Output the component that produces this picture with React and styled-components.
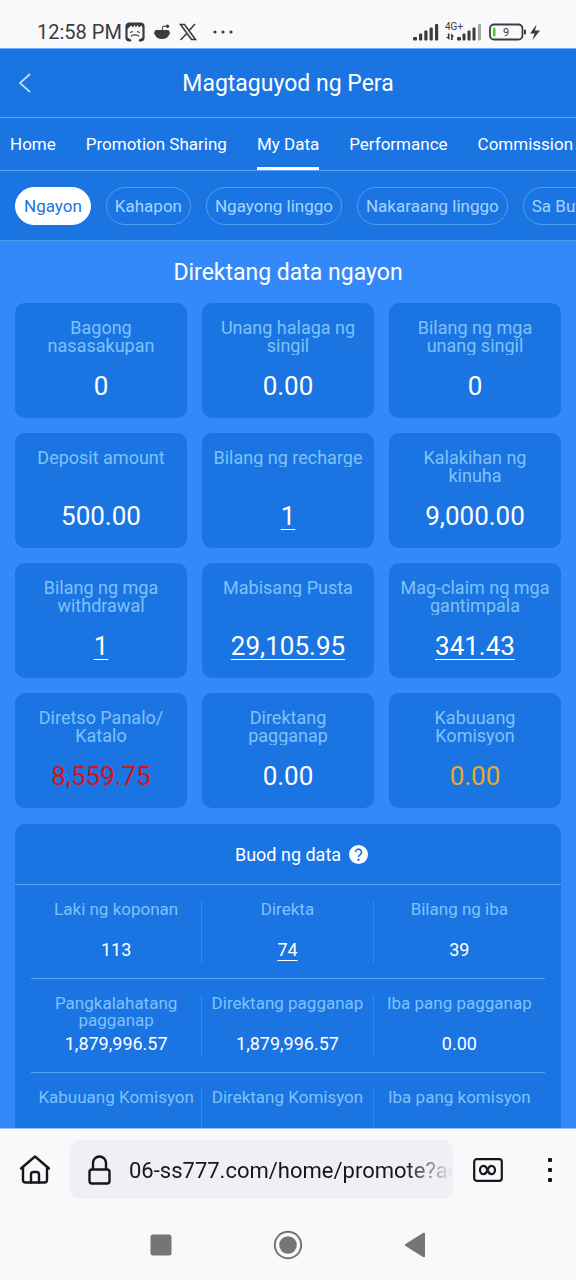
import React, { useState } from 'react'
import styled, { createGlobalStyle } from 'styled-components'

const GlobalStyle = createGlobalStyle`
  *, *::before, *::after {
    box-sizing: border-box;
  }

  body {
    margin: 0;
    background: #f9f9fb;
    font-family: Roboto, 'Noto Sans', sans-serif;
  }

  button, input {
    margin: 0;
    padding: 0;
    border: 0;
    background: none;
    color: inherit;
    font: inherit;
  }

  a {
    color: inherit;
    text-decoration: none;
  }

  svg {
    display: block;
    flex: none;
    overflow: visible;
  }
`

const Screen = styled.div`
  display: flex;
  flex-direction: column;
  height: 100vh;
  overflow: hidden;
`

const StatusBar = styled.div`
  display: flex;
  align-items: center;
  justify-content: space-between;
  height: 48px;
  padding: 15px 35px 0 37px;
  color: #3c3c3e;
  font-size: 20px;
  line-height: 24px;
`

const StatusGroup = styled.div`
  display: flex;
  align-items: center;
  gap: ${({ $gap }) => $gap}px;
`

const Page = styled.main`
  flex: 1;
  min-height: 0;
  overflow: hidden;
  border-top: 1px solid #6aaef6;
  border-bottom: 1px solid #8fc0f8;
  background: #3389f9;
  color: #fff;
`

const Header = styled.header`
  display: grid;
  grid-template-columns: 60px 1fr 60px;
  align-items: center;
  height: 69px;
  border-bottom: 1px solid #55a5f5;
  background: #1a74e2;

  button {
    width: 60px;
    padding-left: 17px;
    color: #b5e0ff;
  }

  h1 {
    margin: 0;
    padding-top: 2px;
    font-size: 23px;
    font-weight: 400;
    line-height: 28px;
    text-align: center;
  }
`

const Tabs = styled.nav`
  display: flex;
  gap: 30px;
  height: 53px;
  padding: 0 10px;
  overflow: hidden;
  border-bottom: 1px solid #55a5f5;
  background: #1a74e2;
`

const Tab = styled.a`
  flex: none;
  border-bottom: 3px solid ${({ $active }) => ($active ? '#fff' : 'transparent')};
  font-size: 17px;
  line-height: 52px;
  white-space: nowrap;
`

const Periods = styled.div`
  display: flex;
  gap: 15px;
  height: 70px;
  padding: 16px 15px;
  overflow: hidden;
  border-bottom: 1px solid #4c9af6;
  background: #1a74e2;
`

const Period = styled.button`
  flex: none;
  height: 38px;
  padding: 0 8px;
  border: 1px solid ${({ $active }) => ($active ? '#fff' : '#4b9ff4')};
  border-radius: 19px;
  background: ${({ $active }) => ($active ? '#fff' : 'transparent')};
  color: ${({ $active }) => ($active ? '#1a74e2' : '#a5d5ff')};
  font-size: 17px;
  white-space: nowrap;
`

const SectionTitle = styled.h2`
  margin: 0;
  padding: 18px 0 16px;
  font-size: 23px;
  font-weight: 400;
  line-height: 28px;
  text-align: center;
`

const Cards = styled.dl`
  display: grid;
  grid-template-columns: repeat(3, 1fr);
  gap: 15px;
  margin: 0 15px 16px;
`

const Card = styled.div`
  height: 115px;
  padding: 16px 8px 0;
  border-radius: 10px;
  background: #1a74e2;
  text-align: center;

  dt {
    height: 36px;
    color: #7fc2fb;
    font-size: 18px;
    line-height: 18px;
  }

  dd {
    margin: 15px 0 0;
    color: ${({ $tone }) => $tone || '#fff'};
    font-size: 26px;
    line-height: 32px;
  }
`

const Clip = styled.span`
  display: block;
  overflow: hidden;
`

const ValueLink = styled.a`
  text-decoration: underline;
  text-decoration-thickness: 1px;
  text-decoration-skip-ink: none;
  text-underline-offset: 4px;
`

const Summary = styled.section`
  margin: 0 15px;
  border-radius: 10px 10px 0 0;
  background: #1a74e2;
`

const SummaryTitle = styled.div`
  display: grid;
  grid-template-columns: 1fr auto 1fr;
  align-items: center;
  column-gap: 8px;
  height: 61px;
  border-bottom: 1px solid #55a5f5;

  h2 {
    grid-column: 2;
    margin: 0;
    font-size: 18px;
    font-weight: 400;
  }

  button {
    justify-self: start;
  }
`

const SummaryRow = styled.dl`
  display: grid;
  grid-template-columns: repeat(3, 1fr);
  margin: 0 16px;
  padding: 16px 0 15px;
  border-bottom: 1px solid #55a5f5;
`

const SummaryCell = styled.div`
  height: 62px;
  padding: 0 5px;
  border-right: 1px solid #3488ec;
  text-align: center;

  &:last-child {
    border-right: 0;
  }

  dt {
    height: 34px;
    color: #7fc2fb;
    font-size: 17px;
    line-height: 17px;
  }

  dd {
    margin: 4px 0 0;
    font-size: 18px;
    line-height: 22px;
  }
`

const BrowserBar = styled.div`
  display: flex;
  align-items: center;
  height: 81px;
  padding: 0 22px 0 19px;
  color: #17171b;
`

const AddressBox = styled.label`
  display: flex;
  flex: 1;
  align-items: center;
  gap: 18px;
  min-width: 0;
  height: 59px;
  margin: 0 20px 0 19px;
  padding-left: 18px;
  border-radius: 10px;
  background: #f0f0f4;

  input {
    flex: 1;
    min-width: 0;
    padding-top: 2px;
    outline: 0;
    font-size: 22px;
    mask-image: linear-gradient(to left, transparent, #000 48px);
  }
`

const MenuButton = styled.button`
  margin-left: 43px;
`

const SystemNav = styled.nav`
  display: flex;
  align-items: center;
  justify-content: center;
  gap: 98px;
  height: 70px;
  color: #757575;
`

const tabs = ['Home', 'Promotion Sharing', 'My Data', 'Performance', 'Commission']

const periods = [
  'Ngayon',
  'Kahapon',
  'Ngayong linggo',
  'Nakaraang linggo',
  'Sa Buwang ito',
]

const cards = [
  { label: 'Bagong nasasakupan', value: '0' },
  { label: 'Unang halaga ng singil', value: '0.00' },
  { label: 'Bilang ng mga unang singil', value: '0' },
  { label: 'Deposit amount', value: '500.00' },
  { label: 'Bilang ng recharge', value: '1', link: true },
  { label: 'Kalakihan ng kinuha', value: '9,000.00' },
  { label: 'Bilang ng mga withdrawal', value: '1', link: true },
  { label: 'Mabisang Pusta', value: '29,105.95', link: true },
  { label: 'Mag-claim ng mga gantimpala', value: '341.43', link: true },
  { label: 'Diretso Panalo/ Katalo', value: '8,559.75', tone: '#d3131d' },
  { label: 'Direktang pagganap', value: '0.00' },
  { label: 'Kabuuang Komisyon', value: '0.00', tone: '#eba92b' },
]

const summary = [
  [
    { label: 'Laki ng koponan', value: '113' },
    { label: 'Direkta', value: '74', link: true },
    { label: 'Bilang ng iba', value: '39' },
  ],
  [
    { label: 'Pangkalahatang pagganap', value: '1,879,996.57' },
    { label: 'Direktang pagganap', value: '1,879,996.57' },
    { label: 'Iba pang pagganap', value: '0.00' },
  ],
  [
    { label: 'Kabuuang Komisyon' },
    { label: 'Direktang Komisyon' },
    { label: 'Iba pang komisyon' },
  ],
]

const DiscordFace = () => (
  <svg width="20" height="20" viewBox="0 0 20 20" fill="none">
    <path
      d="M6 18.500H4.500a3 3 0 0 1-3-3v-11a3 3 0 0 1 3-3h11a3 3 0 0 1 3 3v11a3 3 0 0 1-3 3H14"
      stroke="currentColor"
      strokeWidth="2.200"
    />
    <path d="M2 1h16v5l-1.500-2.500L14 5.500 12.500 3 11 5.500 9.500 3 8 5.500 6 3.500 4 5.500 2 7z" fill="currentColor" />
    <path d="M5 10.500l3-1M12 9.500l3 1M6 14.300c1-1.500 2-1.500 4-1.500s3 0 4 1.500" stroke="currentColor" strokeWidth="1.200" />
    <path d="M2 15l5 3.500H3zM18 15l-5 3.500h4z" fill="currentColor" />
  </svg>
)

const RedditBowl = () => (
  <svg width="18" height="18" viewBox="0 0 18 18" fill="currentColor">
    <path d="M1.500 9.500a2 2 0 0 1 2-2.500h11a2 2 0 0 1 2 2.500c.8.100 1.200 1.200-.2 1.700C15 14.500 12.500 16 9 16s-6-1.500-7.300-4.800C.3 10.700.7 9.600 1.500 9.500z" />
    <path d="M9 8l1-5 4 .5" fill="none" stroke="currentColor" />
    <circle cx="14.500" cy="3.200" r="1.700" />
  </svg>
)

const XLogo = () => (
  <svg width="18" height="18" viewBox="0 0 18 18" fill="none" stroke="currentColor">
    <path d="M1.500 1.500h4l11 15h-4z" strokeWidth="1.600" />
    <path d="M16 1l-6.300 7M7.700 10.500L1.500 17" strokeWidth="1.600" />
  </svg>
)

const Dots = () => (
  <svg width="20" height="4" viewBox="0 0 20 4" fill="currentColor">
    <circle cx="2" cy="2" r="1.600" />
    <circle cx="10" cy="2" r="1.600" />
    <circle cx="18" cy="2" r="1.600" />
  </svg>
)

const Signal = () => (
  <svg width="26" height="18" viewBox="0 0 26 18" fill="currentColor">
    <rect x="0" y="14" width="4" height="3.500" rx="1" />
    <rect x="6" y="10.500" width="3.200" height="7" rx="1" />
    <rect x="11.300" y="7.500" width="3.200" height="10" rx="1" />
    <rect x="16.600" y="4.500" width="3.200" height="13" rx="1" />
    <rect x="22" y="1" width="3.200" height="16.500" rx="1" />
  </svg>
)

const SignalData = () => (
  <svg width="36" height="18" viewBox="0 0 36 18" fill="currentColor">
    <text x="-1" y="7" fontSize="10">4G+</text>
    <path d="M1.800 10.500h1.700v6.500L0 14h1.800zM5 17v-6.500l3.500 3H6.700V17z" />
    <rect x="11" y="14" width="4" height="3.500" rx="1" />
    <rect x="16.500" y="10.500" width="3" height="7" rx="1" />
    <rect x="21.500" y="7.500" width="3" height="10" rx="1" />
    <rect x="26.500" y="4.500" width="3" height="13" rx="1" />
    <rect x="32" y="1" width="3" height="16.500" rx="1" opacity=".45" />
  </svg>
)

const Battery = () => (
  <svg width="52" height="18" viewBox="0 0 52 18" fill="none">
    <rect x="1" y="1.500" width="32.500" height="15" rx="4" stroke="currentColor" strokeWidth="1.800" />
    <rect x="4" y="4.500" width="2.500" height="9" rx="1" fill="#4ccb22" />
    <rect x="35" y="6.500" width="2" height="5" rx="1" fill="currentColor" />
    <text x="14" y="13" fontSize="11" fill="currentColor">9</text>
    <path d="M47.500 1.500L41 10.500h4.500L43.500 17 51 7.500h-5z" fill="currentColor" />
  </svg>
)

const BackIcon = () => (
  <svg width="16" height="20" viewBox="0 0 16 20" fill="none" stroke="currentColor" strokeWidth="1.800">
    <path d="M13 1L3 10l10 9" />
  </svg>
)

const HelpIcon = () => (
  <svg width="19" height="19" viewBox="0 0 19 19">
    <circle cx="9.500" cy="9.500" r="9.500" fill="#fff" />
    <path
      d="M6.500 7.200a3 3 0 1 1 4.700 2.400c-1.100.8-1.700 1.300-1.700 2.500"
      fill="none"
      stroke="#1a74e2"
      strokeWidth="1.600"
    />
    <circle cx="9.500" cy="14.800" r="1.200" fill="#1a74e2" />
  </svg>
)

const HomeIcon = () => (
  <svg
    width="32"
    height="30"
    viewBox="0 0 32 30"
    fill="none"
    stroke="currentColor"
    strokeWidth="2.400"
    strokeLinecap="round"
    strokeLinejoin="round"
  >
    <path d="M2 13.500L16 1.500l14 12" />
    <path d="M4 12.500v12.500a2.500 2.500 0 0 0 2.500 2.500h19A2.500 2.500 0 0 0 28 25V12.500" />
    <path d="M12 27.500v-8a2.500 2.500 0 0 1 2.500-2.500h3a2.500 2.500 0 0 1 2.500 2.500v8" />
  </svg>
)

const LockIcon = () => (
  <svg width="23" height="30" viewBox="0 0 23 30" fill="none" stroke="currentColor" strokeWidth="2.400">
    <rect x="1.500" y="14.500" width="20" height="14" rx="2.500" />
    <path d="M5 14V8a6.500 6.500 0 0 1 13 0v6" />
  </svg>
)

const TabsIcon = () => (
  <svg width="30" height="24" viewBox="0 0 30 24" fill="none" stroke="currentColor" strokeWidth="2.200">
    <rect x="1.200" y="1.200" width="27.600" height="21.600" rx="2.500" />
    <path d="M14.500 12c-1-2.600-2-4.200-3.900-4.200a3.600 4.200 0 0 0 0 8.400c1.900 0 2.900-1.600 3.900-4.200s2-4.200 3.900-4.200a3.600 4.200 0 0 1 0 8.400c-1.900 0-2.900-1.600-3.900-4.200z" />
  </svg>
)

const MoreIcon = () => (
  <svg width="8" height="26" viewBox="0 0 8 26" fill="currentColor">
    <rect x="2" y="1" width="4" height="4" rx="1" />
    <rect x="2" y="11" width="4" height="4" rx="1" />
    <rect x="2" y="21" width="4" height="4" rx="1" />
  </svg>
)

const Value = ({ link, children }) =>
  link ? <ValueLink href="#detail">{children}</ValueLink> : children

export default function App() {
  const [tab, setTab] = useState('My Data')
  const [period, setPeriod] = useState('Ngayon')

  return (
    <Screen>
      <GlobalStyle />

      <StatusBar>
        <StatusGroup $gap={16}>
          <StatusGroup $gap={3}>
            12:58 PM
            <StatusGroup $gap={8}>
              <DiscordFace />
              <RedditBowl />
              <XLogo />
            </StatusGroup>
          </StatusGroup>
          <Dots />
        </StatusGroup>
        <StatusGroup $gap={7}>
          <Signal />
          <SignalData />
          <Battery />
        </StatusGroup>
      </StatusBar>

      <Page>
        <Header>
          <button type="button" aria-label="Back">
            <BackIcon />
          </button>
          <h1>Magtaguyod ng Pera</h1>
        </Header>

        <Tabs>
          {tabs.map((name) => (
            <Tab
              key={name}
              href="#tab"
              $active={name === tab}
              onClick={() => setTab(name)}
            >
              {name}
            </Tab>
          ))}
        </Tabs>

        <Periods>
          {periods.map((name) => (
            <Period
              key={name}
              type="button"
              $active={name === period}
              onClick={() => setPeriod(name)}
            >
              {name}
            </Period>
          ))}
        </Periods>

        <SectionTitle>Direktang data ngayon</SectionTitle>

        <Cards>
          {cards.map(({ label, value, link, tone }) => (
            <Card key={label} $tone={tone}>
              <dt>
                <Clip>{label}</Clip>
              </dt>
              <dd>
                <Value link={link}>{value}</Value>
              </dd>
            </Card>
          ))}
        </Cards>

        <Summary>
          <SummaryTitle>
            <h2>Buod ng data</h2>
            <button type="button" aria-label="Help">
              <HelpIcon />
            </button>
          </SummaryTitle>
          {summary.map((row) => (
            <SummaryRow key={row[0].label}>
              {row.map(({ label, value, link }) => (
                <SummaryCell key={label}>
                  <dt>{label}</dt>
                  <dd>
                    <Value link={link}>{value}</Value>
                  </dd>
                </SummaryCell>
              ))}
            </SummaryRow>
          ))}
        </Summary>
      </Page>

      <BrowserBar>
        <button type="button" aria-label="Home">
          <HomeIcon />
        </button>
        <AddressBox>
          <LockIcon />
          <input
            type="text"
            aria-label="Address"
            defaultValue="06-ss777.com/home/promote?active"
          />
        </AddressBox>
        <button type="button" aria-label="Tabs">
          <TabsIcon />
        </button>
        <MenuButton type="button" aria-label="Menu">
          <MoreIcon />
        </MenuButton>
      </BrowserBar>

      <SystemNav>
        <button type="button" aria-label="Recent apps">
          <svg width="28" height="30" viewBox="0 0 28 30" fill="currentColor">
            <rect x="3.500" y="4.500" width="21" height="21" rx="2.500" />
          </svg>
        </button>
        <button type="button" aria-label="Home screen">
          <svg width="30" height="30" viewBox="0 0 30 30" fill="currentColor">
            <circle cx="15" cy="15" r="13.200" fill="none" stroke="currentColor" strokeWidth="2" />
            <circle cx="15" cy="15" r="8.800" />
          </svg>
        </button>
        <button type="button" aria-label="Go back">
          <svg width="28" height="30" viewBox="0 0 28 30" fill="currentColor">
            <path d="M22 3c1.200-.7 2-.2 2 1v22c0 1.200-.8 1.700-2 1L4.500 16c-.8-.6-.8-1.400 0-2z" />
          </svg>
        </button>
      </SystemNav>
    </Screen>
  )
}
